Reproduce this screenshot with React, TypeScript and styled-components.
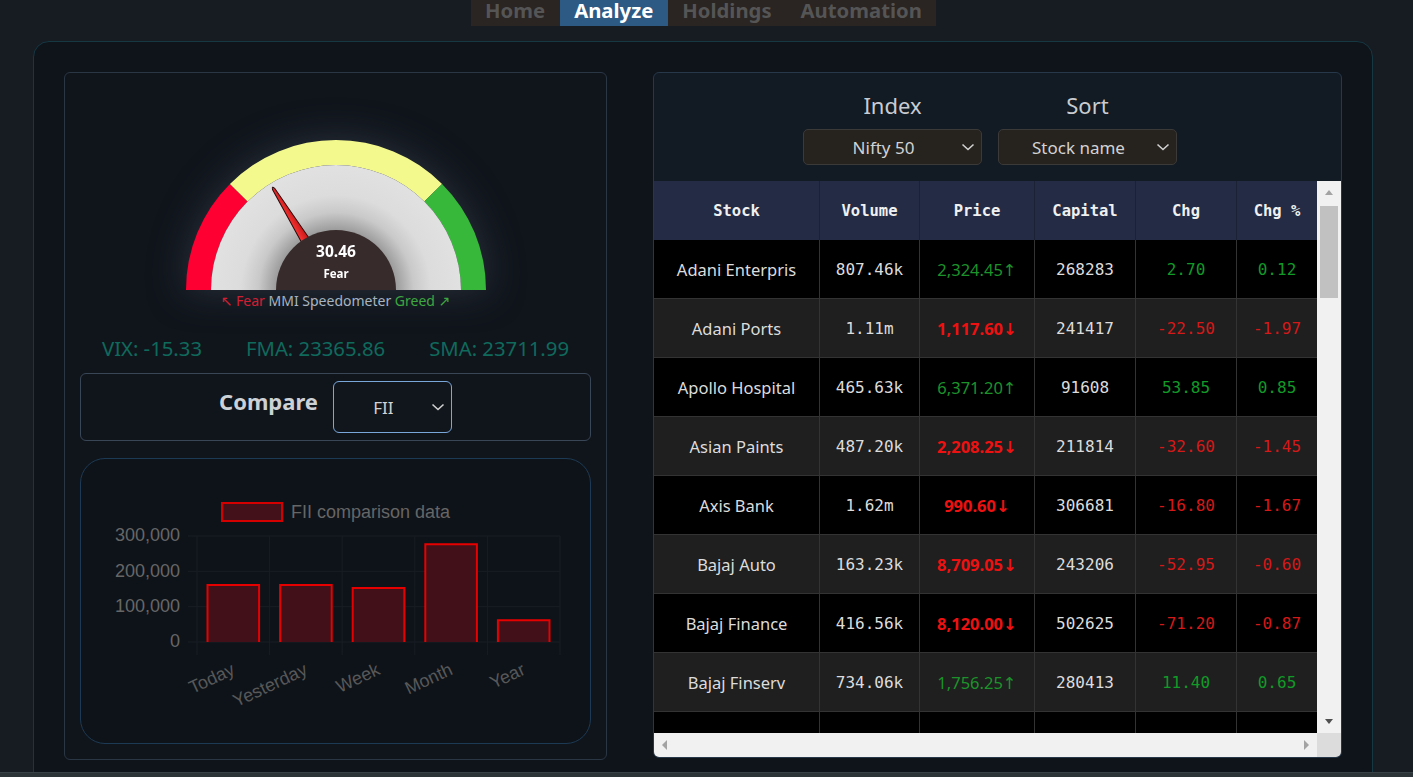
import React from "react";
import styled, { createGlobalStyle } from "styled-components";

const GlobalStyle = createGlobalStyle`
  html, body { margin: 0; padding: 0; background: #171c23; overflow: hidden; }
  body { font-family: "Noto Sans", "DejaVu Sans", sans-serif; }
  #root { height: 777px; }
  * { box-sizing: border-box; }
`;

const Page = styled.div`
  height: 777px;
  display: flex;
  flex-direction: column;
  background: #171c23;
`;

const TopBar = styled.header`
  height: 41px;
  flex: none;
  display: flex;
  justify-content: center;
  padding-right: 6px;
`;

const Tabs = styled.nav`
  display: flex;
  height: 26px;
  background: #2a2422;
`;

const Tab = styled.div<{ $active?: boolean }>`
  height: 26px;
  padding: 0 14.5px 7px;
  display: flex;
  align-items: flex-end;
  line-height: 18px;
  font-size: 20.3px;
  font-weight: 700;
  color: ${(p) => (p.$active ? "#ffffff" : "#555555")};
  background: ${(p) => (p.$active ? "#2d5a84" : "transparent")};
`;

const Stage = styled.main`
  flex: 1;
  overflow: hidden;
  padding-left: 33px;
`;

const Shell = styled.div`
  width: 1340px;
  min-height: 790px;
  border: 1px solid #163843;
  border-radius: 16px;
  background: #0f141a;
  padding: 30px;
  display: flex;
  gap: 46px;
  align-items: flex-start;
`;

const Footer = styled.footer`
  flex: none;
  height: 5px;
  background: #2d3437;
  border-top: 1px solid #384246;
`;

/* ---------- Left card ---------- */

const LeftCard = styled.section`
  width: 543px;
  border: 1px solid #2a3644;
  border-radius: 6px;
  background: #10151c;
  padding: 15px;
  display: flex;
  flex-direction: column;
`;

const GaugeBlock = styled.div`
  margin-top: 37px;
  display: flex;
  flex-direction: column;
  align-items: center;
`;

const GaugeSvg = styled.svg`
  display: block;
  filter: drop-shadow(0 0 18px rgba(70, 78, 92, 0.5));
`;

const GaugeCaption = styled.div`
  height: 18px;
  line-height: 18px;
  font-size: 14px;
  color: #b7c3cf;
  white-space: pre;
`;

const Tone = styled.span<{ $c: string }>`
  color: ${(p) => p.$c};
`;

const StatsRow = styled.div`
  margin-top: 24px;
  display: flex;
  justify-content: space-around;
  font-size: 20.3px;
  line-height: 28px;
  color: #0f6a5c;
`;

const CompareBox = styled.div`
  margin-top: 11px;
  height: 68px;
  border: 1px solid #394656;
  border-radius: 6px;
  display: flex;
  align-items: center;
  justify-content: center;
  gap: 15px;
`;

const CompareLabel = styled.span`
  font-size: 22px;
  font-weight: 700;
  color: #cdd1d5;
  margin-bottom: 12px;
`;

const SelectBox = styled.div<{ $w: number; $h: number; $bg: string; $border: string; $fs: number; $r: number }>`
  width: ${(p) => p.$w}px;
  height: ${(p) => p.$h}px;
  background: ${(p) => p.$bg};
  border: 1px solid ${(p) => p.$border};
  border-radius: ${(p) => p.$r}px;
  display: flex;
  align-items: center;
  padding: 0 6px 0 0;
  font-size: ${(p) => p.$fs}px;
  color: #d2d2d2;
`;

const SelectText = styled.span`
  flex: 1;
  text-align: center;
  padding-left: 2px;
`;

const ChartBox = styled.div`
  margin-top: 17px;
  height: 286px;
  border: 1px solid #1d3a55;
  border-radius: 25px;
  background: #0e1319;
  overflow: hidden;
`;

const ChartSvg = styled.svg`
  display: block;
  font-family: "Liberation Sans", Arial, sans-serif;
`;

/* ---------- Right card ---------- */

const RightCard = styled.section`
  width: 689px;
  border: 1px solid #26384a;
  border-radius: 6px;
  background: #121a23;
  overflow: hidden;
  display: flex;
  flex-direction: column;
`;

const FilterBar = styled.div`
  height: 108px;
  padding: 17px 15px 0 0;
  display: flex;
  justify-content: center;
  gap: 16px;
`;

const FilterGroup = styled.div`
  display: flex;
  flex-direction: column;
  align-items: center;
  gap: 9px;
`;

const FilterLabel = styled.div`
  font-size: 22px;
  line-height: 30px;
  color: #c8ccd1;
`;

const TableFrame = styled.div`
  display: grid;
  grid-template-columns: 663px 24px;
  grid-template-rows: 552px 24px;
`;

const TableViewport = styled.div`
  overflow: hidden;
  background: #000;
`;

const Table = styled.table`
  width: 663px;
  table-layout: fixed;
  border-collapse: separate;
  border-spacing: 0;
`;

const HeadCell = styled.th`
  height: 59px;
  padding: 0;
  background: #232c44;
  border-right: 1px solid #1b2236;
  font-family: "DejaVu Sans Mono", "Liberation Mono", monospace;
  font-size: 15.5px;
  font-weight: 700;
  color: #f0f0f0;
  text-align: center;
  &:last-child { border-right: none; }
`;

const BodyRow = styled.tr<{ $odd: boolean }>`
  height: 59px;
  background: ${(p) => (p.$odd ? "#000000" : "#1f1f1f")};
`;

const Cell = styled.td<{ $mono?: boolean; $color?: string; $bold?: boolean }>`
  padding: 0;
  border-right: 1px solid #333333;
  border-bottom: 1px solid #333333;
  text-align: center;
  white-space: nowrap;
  overflow: hidden;
  font-family: ${(p) =>
    p.$mono ? '"DejaVu Sans Mono", "Liberation Mono", monospace' : '"Noto Sans", "DejaVu Sans", sans-serif'};
  font-size: ${(p) => (p.$mono ? "16px" : "16.5px")};
  font-weight: ${(p) => (p.$bold ? 700 : 400)};
  color: ${(p) => p.$color || "#dcdcdc"};
  &:last-child { border-right: none; }
`;

const VScroll = styled.div`
  background: #f1f1f1;
  display: flex;
  flex-direction: column;
`;

const ScrollBtn = styled.div`
  height: 23px;
  flex: none;
  display: flex;
  align-items: center;
  justify-content: center;
`;

const ScrollTrack = styled.div`
  flex: 1;
  padding: 2px 3px 0 3px;
`;

const Thumb = styled.div`
  height: 92px;
  background: #c1c1c1;
`;

const HScroll = styled.div`
  background: #f1f1f1;
  display: flex;
  align-items: center;
  justify-content: space-between;
  padding: 0 8px;
`;

const Corner = styled.div`
  background: #dcdcdc;
`;

const Tri = styled.span<{ $dir: "up" | "down" | "left" | "right"; $c: string }>`
  width: 0;
  height: 0;
  border-style: solid;
  ${(p) =>
    p.$dir === "up"
      ? `border-width: 0 4.5px 5px 4.5px; border-color: transparent transparent ${p.$c} transparent;`
      : p.$dir === "down"
      ? `border-width: 5px 4.5px 0 4.5px; border-color: ${p.$c} transparent transparent transparent;`
      : p.$dir === "left"
      ? `border-width: 5px 5px 5px 0; border-color: transparent ${p.$c} transparent transparent;`
      : `border-width: 5px 0 5px 5px; border-color: transparent transparent transparent ${p.$c};`}
`;

/* ---------- Pieces ---------- */

const Chevron: React.FC = () => (
  <svg width="14" height="8" viewBox="0 0 14 8">
    <polyline points="1.5,1.5 7,6.5 12.5,1.5" fill="none" stroke="#d0d0d0" strokeWidth="1.6" />
  </svg>
);

const Gauge: React.FC = () => (
  <GaugeSvg width="340" height="167" viewBox="0 0 340 167">
    <defs>
      <radialGradient id="disk" cx="170" cy="165" r="125" gradientUnits="userSpaceOnUse">
        <stop offset="0" stopColor="#777" />
        <stop offset="0.48" stopColor="#9c9c9c" />
        <stop offset="0.62" stopColor="#c9c9c9" />
        <stop offset="0.76" stopColor="#dcdcdc" />
        <stop offset="1" stopColor="#e1e1e1" />
      </radialGradient>
      <linearGradient id="needle" x1="0" y1="0" x2="1" y2="0">
        <stop offset="0" stopColor="#ff3a3a" />
        <stop offset="1" stopColor="#c41414" />
      </linearGradient>
    </defs>
    <path d="M 20 165 A 150 150 0 0 1 63.93 58.93 L 81.61 76.61 A 125 125 0 0 0 45 165 Z" fill="#ff0033" />
    <path d="M 63.93 58.93 A 150 150 0 0 1 276.07 58.93 L 258.39 76.61 A 125 125 0 0 0 81.61 76.61 Z" fill="#f4f98d" />
    <path d="M 276.07 58.93 A 150 150 0 0 1 320 165 L 295 165 A 125 125 0 0 0 258.39 76.61 Z" fill="#37b83b" />
    <path d="M 45 165 A 125 125 0 0 1 295 165 Z" fill="url(#disk)" />
    <g transform="translate(170 165) rotate(-31.7)">
      <path d="M -5 -45 L -1.3 -118.5 Q 0 -123 1.3 -118.5 L 5 -45 Z" fill="url(#needle)" stroke="#2a0a0a" strokeWidth="1" />
    </g>
    <path d="M 110 165 A 60 60 0 0 1 230 165 Z" fill="#372b2b" />
    <text x="170" y="131.5" textAnchor="middle" fill="#ffffff" fontSize="15.5" fontWeight="700">
      30.46
    </text>
    <text x="170" y="152.5" textAnchor="middle" fill="#ffffff" fontSize="11.5" fontWeight="700">
      Fear
    </text>
  </GaugeSvg>
);

const chartData = [
  { label: "Today", v: 161 },
  { label: "Yesterday", v: 161 },
  { label: "Week", v: 152.5 },
  { label: "Month", v: 277 },
  { label: "Year", v: 61.5 },
];

const FiiChart: React.FC = () => {
  const left = 197;
  const right = 560;
  const zero = 642;
  const per100 = 35.33;
  const step = (right - left) / chartData.length;
  const gridColor = "#181d24";
  const yTicks = [0, 100, 200, 300];
  return (
    <ChartSvg width="509" height="284" viewBox="81 459 509 284">
      <rect x="222" y="503" width="60" height="18" fill="#42111a" stroke="#d40000" strokeWidth="2" />
      <text x="291" y="518" fontSize="18" fill="#666">
        FII comparison data
      </text>
      {yTicks.map((t) => {
        const y = zero - (t / 100) * per100;
        return (
          <g key={t}>
            <line x1={left - 9} x2={right} y1={y} y2={y} stroke={gridColor} strokeWidth="1" />
            <text x="180" y={y + 5.3} fontSize="18" fill="#666" textAnchor="end">
              {t === 0 ? "0" : `${t},000`}
            </text>
          </g>
        );
      })}
      {Array.from({ length: chartData.length + 1 }).map((_, i) => {
        const x = left + i * step;
        return <line key={i} x1={x} x2={x} y1={zero - 3 * per100} y2={zero + 13} stroke={gridColor} strokeWidth="1" />;
      })}
      {chartData.map((d, i) => {
        const cx = left + step * (i + 0.5);
        const w = 51.6;
        const x0 = cx - w / 2;
        const x1 = cx + w / 2;
        const top = zero - (d.v / 100) * per100;
        return (
          <g key={d.label}>
            <rect x={x0} y={top} width={w} height={zero - top} fill="#411018" />
            <path d={`M ${x0} ${zero} V ${top} H ${x1} V ${zero}`} fill="none" stroke="#e60000" strokeWidth="2" />
            <text
              x={cx}
              y={668}
              dy="0.35em"
              fontSize="18"
              fill="#585858"
              textAnchor="end"
              transform={`rotate(-25 ${cx} 668)`}
            >
              {d.label}
            </text>
          </g>
        );
      })}
    </ChartSvg>
  );
};

type Row = { name: string; vol: string; price: string; up: boolean; cap: string; chg: string; pct: string };

const rows: Row[] = [
  { name: "Adani Enterpris", vol: "807.46k", price: "2,324.45", up: true, cap: "268283", chg: "2.70", pct: "0.12" },
  { name: "Adani Ports", vol: "1.11m", price: "1,117.60", up: false, cap: "241417", chg: "-22.50", pct: "-1.97" },
  { name: "Apollo Hospital", vol: "465.63k", price: "6,371.20", up: true, cap: "91608", chg: "53.85", pct: "0.85" },
  { name: "Asian Paints", vol: "487.20k", price: "2,208.25", up: false, cap: "211814", chg: "-32.60", pct: "-1.45" },
  { name: "Axis Bank", vol: "1.62m", price: "990.60", up: false, cap: "306681", chg: "-16.80", pct: "-1.67" },
  { name: "Bajaj Auto", vol: "163.23k", price: "8,709.05", up: false, cap: "243206", chg: "-52.95", pct: "-0.60" },
  { name: "Bajaj Finance", vol: "416.56k", price: "8,120.00", up: false, cap: "502625", chg: "-71.20", pct: "-0.87" },
  { name: "Bajaj Finserv", vol: "734.06k", price: "1,756.25", up: true, cap: "280413", chg: "11.40", pct: "0.65" },
  { name: "Bharti Airtel", vol: "2.05m", price: "1,402.30", up: true, cap: "812456", chg: "8.15", pct: "0.58" },
];

const GREEN_PRICE = "#1c922b";
const GREEN_MONO = "#119a28";
const RED_PRICE = "#ee1111";
const RED_MONO = "#d51818";

const colWidths = [166, 100, 115, 101, 101, 80];
const heads = ["Stock", "Volume", "Price", "Capital", "Chg", "Chg %"];

const StockTable: React.FC = () => (
  <TableFrame>
    <TableViewport>
      <Table>
        <colgroup>
          {colWidths.map((w, i) => (
            <col key={i} style={{ width: w }} />
          ))}
        </colgroup>
        <thead>
          <tr>
            {heads.map((h) => (
              <HeadCell key={h}>{h}</HeadCell>
            ))}
          </tr>
        </thead>
        <tbody>
          {rows.map((r, i) => (
            <BodyRow key={r.name} $odd={i % 2 === 0}>
              <Cell>{r.name}</Cell>
              <Cell $mono>{r.vol}</Cell>
              <Cell $color={r.up ? GREEN_PRICE : RED_PRICE} $bold={!r.up}>
                {r.price}
                {r.up ? "↑" : "↓"}
              </Cell>
              <Cell $mono>{r.cap}</Cell>
              <Cell $mono $color={r.up ? GREEN_MONO : RED_MONO}>
                {r.chg}
              </Cell>
              <Cell $mono $color={r.up ? GREEN_MONO : RED_MONO}>
                {r.pct}
              </Cell>
            </BodyRow>
          ))}
        </tbody>
      </Table>
    </TableViewport>
    <VScroll>
      <ScrollBtn>
        <Tri $dir="up" $c="#a3a3a3" />
      </ScrollBtn>
      <ScrollTrack>
        <Thumb />
      </ScrollTrack>
      <ScrollBtn>
        <Tri $dir="down" $c="#505050" />
      </ScrollBtn>
    </VScroll>
    <HScroll>
      <Tri $dir="left" $c="#a3a3a3" />
      <Tri $dir="right" $c="#a3a3a3" />
    </HScroll>
    <Corner />
  </TableFrame>
);

export default function App() {
  return (
    <>
      <GlobalStyle />
      <Page>
        <TopBar>
          <Tabs>
            <Tab>Home</Tab>
            <Tab $active>Analyze</Tab>
            <Tab>Holdings</Tab>
            <Tab>Automation</Tab>
          </Tabs>
        </TopBar>
        <Stage>
          <Shell>
            <LeftCard>
              <GaugeBlock>
                <Gauge />
                <GaugeCaption>
                  <Tone $c="#e8182c">↖ Fear</Tone> MMI Speedometer <Tone $c="#3db53d">Greed ↗</Tone>
                </GaugeCaption>
              </GaugeBlock>
              <StatsRow>
                <span>VIX: -15.33</span>
                <span>FMA: 23365.86</span>
                <span>SMA: 23711.99</span>
              </StatsRow>
              <CompareBox>
                <CompareLabel>Compare</CompareLabel>
                <SelectBox $w={119} $h={52} $bg="#11161d" $border="#79a7da" $fs={17} $r={6}>
                  <SelectText>FII</SelectText>
                  <Chevron />
                </SelectBox>
              </CompareBox>
              <ChartBox>
                <FiiChart />
              </ChartBox>
            </LeftCard>
            <RightCard>
              <FilterBar>
                <FilterGroup>
                  <FilterLabel>Index</FilterLabel>
                  <SelectBox $w={179} $h={36} $bg="#26231f" $border="#3b3a38" $fs={17} $r={5}>
                    <SelectText>Nifty 50</SelectText>
                    <Chevron />
                  </SelectBox>
                </FilterGroup>
                <FilterGroup>
                  <FilterLabel>Sort</FilterLabel>
                  <SelectBox $w={179} $h={36} $bg="#26231f" $border="#3b3a38" $fs={17} $r={5}>
                    <SelectText>Stock name</SelectText>
                    <Chevron />
                  </SelectBox>
                </FilterGroup>
              </FilterBar>
              <StockTable />
            </RightCard>
          </Shell>
        </Stage>
        <Footer />
      </Page>
    </>
  );
}
